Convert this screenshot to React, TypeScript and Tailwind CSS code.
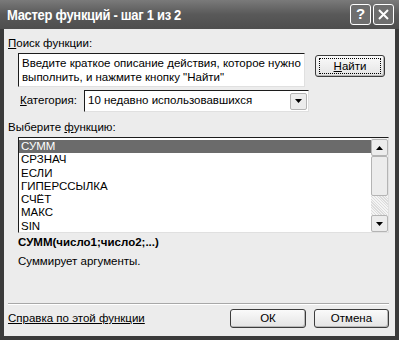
import React from 'react'

const items = ['СУММ', 'СРЗНАЧ', 'ЕСЛИ', 'ГИПЕРССЫЛКА', 'СЧЁТ', 'МАКС', 'SIN']

function XpButton({ children, focused, className }: { children: React.ReactNode; focused?: boolean; className?: string }) {
  return (
    <div
      className={`flex items-center justify-center rounded-[3px] border border-[#3c3c3c] bg-gradient-to-b from-[#fafafa] to-[#e4e4e4] shadow-[inset_-1px_-1px_0_#b8b8b8] ${className ?? ''}`}
    >
      <span className={focused ? 'border border-dotted border-black px-[14px] leading-[14px]' : ''}>{children}</span>
    </div>
  )
}

function ArrowBtn({ up }: { up?: boolean }) {
  return (
    <div className="flex h-[17px] w-[17px] items-center justify-center rounded-[2px] border border-[#b4b4b4] bg-[#ececec]">
      <svg width="7" height="4" viewBox="0 0 7 4">
        {up ? <path d="M3.5 0 L7 4 L0 4 Z" fill="#000" /> : <path d="M0 0 L7 0 L3.5 4 Z" fill="#000" />}
      </svg>
    </div>
  )
}

export default function App() {
  return (
    <div
      className="flex h-[340px] w-[399px] flex-col bg-[#3a3a3a] text-[11.5px] text-black"
      style={{ fontFamily: '"Liberation Sans", Arial, sans-serif' }}
    >
      {/* title bar */}
      <div className="flex h-[29px] items-center justify-between bg-gradient-to-b from-[#7a7a7a] via-[#595959] to-[#4e4e4e] pl-[7px] pr-[5px]">
        <span className="origin-left scale-y-[1.15] text-[13px] font-bold tracking-[-0.3px] text-white">
          Мастер функций - шаг 1 из 2
        </span>
        <div className="flex gap-[2px]">
          <div className="flex h-[21px] w-[21px] items-center justify-center rounded-[3px] border border-white bg-[#6e6e6e] text-[15px] font-bold text-white">
            ?
          </div>
          <div className="flex h-[21px] w-[21px] items-center justify-center rounded-[3px] border border-white bg-[#6e6e6e]">
            <svg width="11" height="11" viewBox="0 0 11 11">
              <path d="M1 1 L10 10 M10 1 L1 10" stroke="#fff" strokeWidth="2" />
            </svg>
          </div>
        </div>
      </div>

      {/* body */}
      <div className="mx-[4px] mb-[4px] flex flex-1 flex-col bg-[#ececec] pl-[4px] pr-[6px]">
        <div className="mt-[7px] leading-[14px]">
          <span className="underline">П</span>оиск функции:
        </div>
        <div className="mt-[3px] flex items-start">
          <div className="ml-[10px] h-[34px] w-[287px] border border-[#1c1c1c] border-b-[#e0e0e0] border-r-[#e0e0e0] bg-white px-[3px] pt-[2px] leading-[14px]">
            Введите краткое описание действия, которое нужно выполнить, и нажмите кнопку "Найти"
          </div>
          <XpButton focused className="ml-[10px] mt-[2px] h-[22px] w-[70px]">
            <span className="underline">Н</span>айти
          </XpButton>
        </div>
        <div className="mt-[3px] flex items-center">
          <div className="ml-[12px] w-[64px]">
            <span className="underline">К</span>атегория:
          </div>
          <div className="flex h-[22px] w-[225px] items-center justify-between border border-[#1c1c1c] border-b-[#e0e0e0] border-r-[#e0e0e0] bg-white pl-[3px] pr-[1px]">
            <span>10 недавно использовавшихся</span>
            <ArrowBtn />
          </div>
        </div>

        <div className="mt-[8px] leading-[14px]">
          Выберите <span className="underline">ф</span>ункцию:
        </div>
        <div className="ml-[10px] mt-[3px] flex h-[96px] w-[371px] border border-[#1c1c1c] border-b-[#e0e0e0] border-r-[#e0e0e0] bg-white">
          <div className="flex-1 pt-[2px]">
            {items.map((it, i) => (
              <div
                key={it}
                className={`h-[13.3px] pl-[2px] leading-[13px] ${i === 0 ? 'bg-[#6b6b6b] text-white' : ''}`}
              >
                {it}
              </div>
            ))}
          </div>
          <div className="flex w-[17px] flex-col bg-[#f2f2f2] pt-[1px]">
            <ArrowBtn up />
            <div className="h-[40px] w-[17px] rounded-[2px] border border-[#b4b4b4] bg-[#ececec]" />
            <div className="flex-1 bg-[repeating-linear-gradient(45deg,#f4f4f4_0_1px,#dcdcdc_1px_2px)]" />
            <ArrowBtn />
          </div>
        </div>

        <div className="ml-[10px] mt-[2px] font-bold leading-[14px]">СУММ(число1;число2;...)</div>
        <div className="ml-[10px] mt-[5px] leading-[14px]">Суммирует аргументы.</div>

        <div className="mt-auto border-t border-[#a8a8a8] shadow-[0_1px_0_#fff]" />
        <div className="mb-[8px] mt-[5px] flex items-center">
          <span className="flex-1 underline">Справка по этой функции</span>
          <XpButton className="h-[19px] w-[76px]">ОК</XpButton>
          <XpButton className="ml-[8px] h-[19px] w-[75px]">Отмена</XpButton>
        </div>
      </div>
    </div>
  )
}
